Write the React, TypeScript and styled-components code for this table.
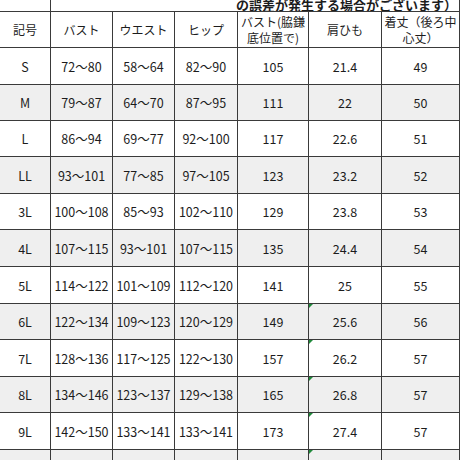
import { FunctionComponent, JSX } from 'react';
import styled, { createGlobalStyle } from "styled-components";

const GlobalStyle = createGlobalStyle`
  body {
    margin: 0;
    background: #ffffff;
    overflow: hidden;
  }
`;

const COLS = '51px 62px 62px 63px 71px 73px 78px';
const LINE = '#3a3a3a';

const Sheet = styled.div`
  width: 460px;
  height: 460px;
  overflow: hidden;
  font-family: "Noto Sans CJK JP", "Liberation Sans", sans-serif;
  color: #1c1c1c;
  display: flex;
  flex-direction: column;
`;

const Row = styled.div<{ $h: number; $shade?: boolean; $cols?: string }>`
  display: grid;
  grid-template-columns: ${({ $cols }) => $cols || COLS};
  height: ${({ $h }) => $h}px;
  flex-shrink: 0;
  background: ${({ $shade }) => ($shade ? '#efefef' : '#ffffff')};
`;

const Cell = styled.div<{ $mark?: boolean }>`
  position: relative;
  display: flex;
  align-items: center;
  justify-content: center;
  text-align: center;
  border-right: 1px solid ${LINE};
  border-bottom: 1px solid ${LINE};
  font-size: 12.5px;
  white-space: nowrap;
  &::before {
    content: '';
    display: ${({ $mark }) => ($mark ? 'block' : 'none')};
    position: absolute;
    left: 0;
    top: 0;
    border-top: 4px solid #1f8a3a;
    border-right: 4px solid transparent;
  }
`;

const HeadCell = styled(Cell)`
  font-size: 12px;
  line-height: 16px;
`;

const NoteCell = styled.div`
  display: flex;
  align-items: flex-end;
  justify-content: flex-end;
  overflow: hidden;
  border-right: 1px solid ${LINE};
  border-bottom: 1px solid ${LINE};
  padding-right: 2px;
  font-size: 13px;
  font-weight: bold;
  line-height: 13px;
  white-space: nowrap;
`;

const sizes = [
  ['S', '72～80', '58～64', '82～90', '105', '21.4', '49'],
  ['M', '79～87', '64～70', '87～95', '111', '22', '50'],
  ['L', '86～94', '69～77', '92～100', '117', '22.6', '51'],
  ['LL', '93～101', '77～85', '97～105', '123', '23.2', '52'],
  ['3L', '100～108', '85～93', '102～110', '129', '23.8', '53'],
  ['4L', '107～115', '93～101', '107～115', '135', '24.4', '54'],
  ['5L', '114～122', '101～109', '112～120', '141', '25', '55'],
  ['6L', '122～134', '109～123', '120～129', '149', '25.6', '56'],
  ['7L', '128～136', '117～125', '122～130', '157', '26.2', '57'],
  ['8L', '134～146', '123～137', '129～138', '165', '26.8', '57'],
  ['9L', '142～150', '133～141', '133～141', '173', '27.4', '57'],
];
const heights = [37, 36, 36, 37, 36, 37, 37, 36, 37, 36, 37];

const App: FunctionComponent = (): JSX.Element => {
  return (
    <>
      <GlobalStyle />
      <Sheet>
        <Row $h={12} $cols="51px 409px">
          <Cell />
          <NoteCell>の誤差が発生する場合がございます）</NoteCell>
        </Row>
        <Row $h={36}>
          <HeadCell>記号</HeadCell>
          <HeadCell>バスト</HeadCell>
          <HeadCell>ウエスト</HeadCell>
          <HeadCell>ヒップ</HeadCell>
          <HeadCell>バスト(脇鎌<br />底位置で)</HeadCell>
          <HeadCell>肩ひも</HeadCell>
          <HeadCell>着丈（後ろ中<br />心丈）</HeadCell>
        </Row>
        {sizes.map((s, i) => (
          <Row key={s[0]} $h={heights[i]} $shade={i % 2 === 1}>
            {s.map((v, j) => (
              <Cell key={j} $mark={j === 5 && i >= 7}>{v}</Cell>
            ))}
          </Row>
        ))}
        <Row $h={30} $shade>
          {[0, 1, 2, 3, 4, 5, 6].map((j) => (
            <Cell key={j} $mark={j === 5} />
          ))}
        </Row>
      </Sheet>
    </>
  );
};

export default App;
